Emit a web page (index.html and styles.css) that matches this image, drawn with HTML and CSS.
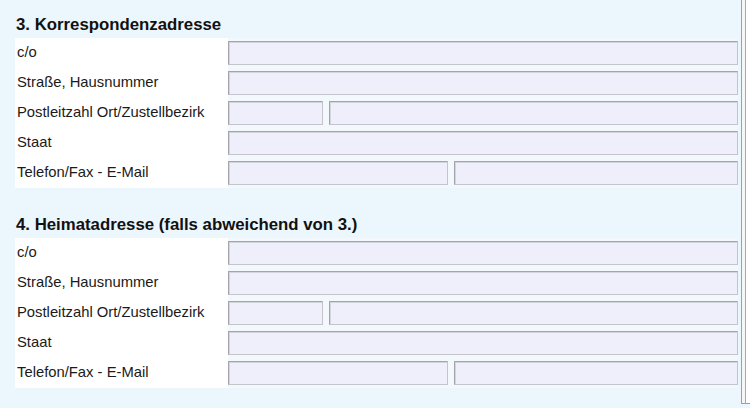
FILE: index.html
```html
<!DOCTYPE html>
<html lang="de">
<head>
<meta charset="utf-8">
<title>Adressen</title>
<link rel="stylesheet" href="styles.css">
</head>
<body>
<div class="page">
  <section class="section first">
    <h3 class="heading">3. Korrespondenzadresse</h3>
    <div class="form">
      <div class="row"><div class="label">c/o</div><div class="fields"><input class="inp full"></div></div>
      <div class="row"><div class="label">Straße, Hausnummer</div><div class="fields"><input class="inp full"></div></div>
      <div class="row"><div class="label">Postleitzahl Ort/Zustellbezirk</div><div class="fields"><input class="inp plz"><input class="inp rest"></div></div>
      <div class="row"><div class="label">Staat</div><div class="fields"><input class="inp full"></div></div>
      <div class="row"><div class="label">Telefon/Fax - E-Mail</div><div class="fields"><input class="inp tel"><input class="inp rest"></div></div>
    </div>
  </section>
  <section class="section second">
    <h3 class="heading">4. Heimatadresse (falls abweichend von 3.)</h3>
    <div class="form">
      <div class="row"><div class="label">c/o</div><div class="fields"><input class="inp full"></div></div>
      <div class="row"><div class="label">Straße, Hausnummer</div><div class="fields"><input class="inp full"></div></div>
      <div class="row"><div class="label">Postleitzahl Ort/Zustellbezirk</div><div class="fields"><input class="inp plz"><input class="inp rest"></div></div>
      <div class="row"><div class="label">Staat</div><div class="fields"><input class="inp full"></div></div>
      <div class="row"><div class="label">Telefon/Fax - E-Mail</div><div class="fields"><input class="inp tel"><input class="inp rest"></div></div>
    </div>
  </section>
</div>
<div class="frame"></div>
</body>
</html>
```
FILE: styles.css
```css
html, body {
  margin: 0;
  padding: 0;
  height: 408px;
  overflow: hidden;
}
body {
  display: flex;
  background: #ecf6fd;
  font-family: "Liberation Sans", Arial, sans-serif;
  color: #111;
}
.page {
  width: 741px;
  padding-left: 15px;
  box-sizing: border-box;
}
.section.first {
  padding-top: 14px;
}
.section.second {
  margin-top: 26px;
}
.heading {
  margin: 0 0 2px 1px;
  font-size: 16.8px;
  line-height: 22px;
  font-weight: bold;
  color: #111;
}
.form {
  display: flex;
  flex-direction: column;
}
.row {
  display: grid;
  grid-template-columns: 213px 510px;
  height: 30px;
}
.label {
  background: #fff;
  font-size: 14.8px;
  line-height: 29px;
  padding-left: 2px;
  white-space: nowrap;
  color: #1a1a1a;
}
.fields {
  display: flex;
  gap: 6px;
  padding-top: 3px;
  background: #f3f8fc;
}
.inp {
  appearance: none;
  height: 24px;
  box-sizing: border-box;
  margin: 0;
  padding: 0;
  background: #efeffb;
  border: 1px solid;
  border-color: #a4a4ac #c4c4cc #c4c4cc #a4a4ac;
  box-shadow: inset 1px 1px 0 #d4d4de;
  outline: none;
}
.full { width: 510px; }
.plz { width: 95px; }
.tel { width: 220px; }
.rest { flex: 1; min-width: 0; }
.frame {
  width: 9px;
  height: 404px;
  box-sizing: border-box;
  border-left: 1px solid #a0a0a0;
  border-bottom: 1px solid #a0a0a0;
  background: linear-gradient(to right, #f6f6f6 0 3px, #a8a8a8 3px 4px, #fff 4px);
}
```
